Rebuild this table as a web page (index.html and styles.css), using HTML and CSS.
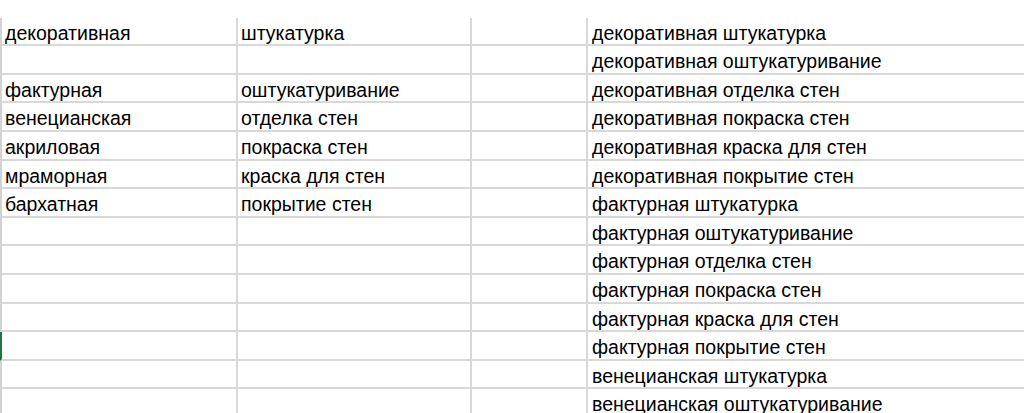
FILE: index.html
```html
<!DOCTYPE html>
<html lang="ru">
<head>
<meta charset="utf-8">
<link rel="stylesheet" href="styles.css">
</head>
<body>
<div class="sheet">
  <div class="row"><div class="cell a">декоративная</div><div class="cell b">штукатурка</div><div class="cell c"></div><div class="cell d">декоративная штукатурка</div></div>
  <div class="row"><div class="cell a"></div><div class="cell b"></div><div class="cell c"></div><div class="cell d">декоративная оштукатуривание</div></div>
  <div class="row"><div class="cell a">фактурная</div><div class="cell b">оштукатуривание</div><div class="cell c"></div><div class="cell d">декоративная отделка стен</div></div>
  <div class="row"><div class="cell a">венецианская</div><div class="cell b">отделка стен</div><div class="cell c"></div><div class="cell d">декоративная покраска стен</div></div>
  <div class="row"><div class="cell a">акриловая</div><div class="cell b">покраска стен</div><div class="cell c"></div><div class="cell d">декоративная краска для стен</div></div>
  <div class="row"><div class="cell a">мраморная</div><div class="cell b">краска для стен</div><div class="cell c"></div><div class="cell d">декоративная покрытие стен</div></div>
  <div class="row"><div class="cell a">бархатная</div><div class="cell b">покрытие стен</div><div class="cell c"></div><div class="cell d">фактурная штукатурка</div></div>
  <div class="row"><div class="cell a"></div><div class="cell b"></div><div class="cell c"></div><div class="cell d">фактурная оштукатуривание</div></div>
  <div class="row"><div class="cell a"></div><div class="cell b"></div><div class="cell c"></div><div class="cell d">фактурная отделка стен</div></div>
  <div class="row"><div class="cell a"></div><div class="cell b"></div><div class="cell c"></div><div class="cell d">фактурная покраска стен</div></div>
  <div class="row"><div class="cell a"></div><div class="cell b"></div><div class="cell c"></div><div class="cell d">фактурная краска для стен</div></div>
  <div class="row selected"><div class="cell a"></div><div class="cell b"></div><div class="cell c"></div><div class="cell d">фактурная покрытие стен</div></div>
  <div class="row"><div class="cell a"></div><div class="cell b"></div><div class="cell c"></div><div class="cell d">венецианская штукатурка</div></div>
  <div class="row"><div class="cell a"></div><div class="cell b"></div><div class="cell c"></div><div class="cell d">венецианская оштукатуривание</div></div>
</div>
</body>
</html>
```
FILE: styles.css
```css
html, body {
  margin: 0;
  padding: 0;
  background: #ffffff;
  overflow: hidden;
}

.sheet {
  padding-top: 17.6px;
  font-family: "Liberation Sans", Arial, sans-serif;
  font-size: 19.5px;
  color: #000000;
}

.row {
  display: grid;
  grid-template-columns: 236px 234px 116px 1fr;
  height: 28.6px;
  box-sizing: border-box;
  border-bottom: 2px solid #d8d8d8;
  border-left: 2px solid #d2d2d2;
}

.row.selected {
  border-left-color: #217346;
}

.cell {
  box-sizing: border-box;
  padding: 4px 0 0 3px;
  white-space: nowrap;
  overflow: hidden;
  line-height: 22px;
  border-right: 2px solid #d8d8d8;
}

.cell.d {
  border-right: none;
  padding-left: 4px;
}
```
